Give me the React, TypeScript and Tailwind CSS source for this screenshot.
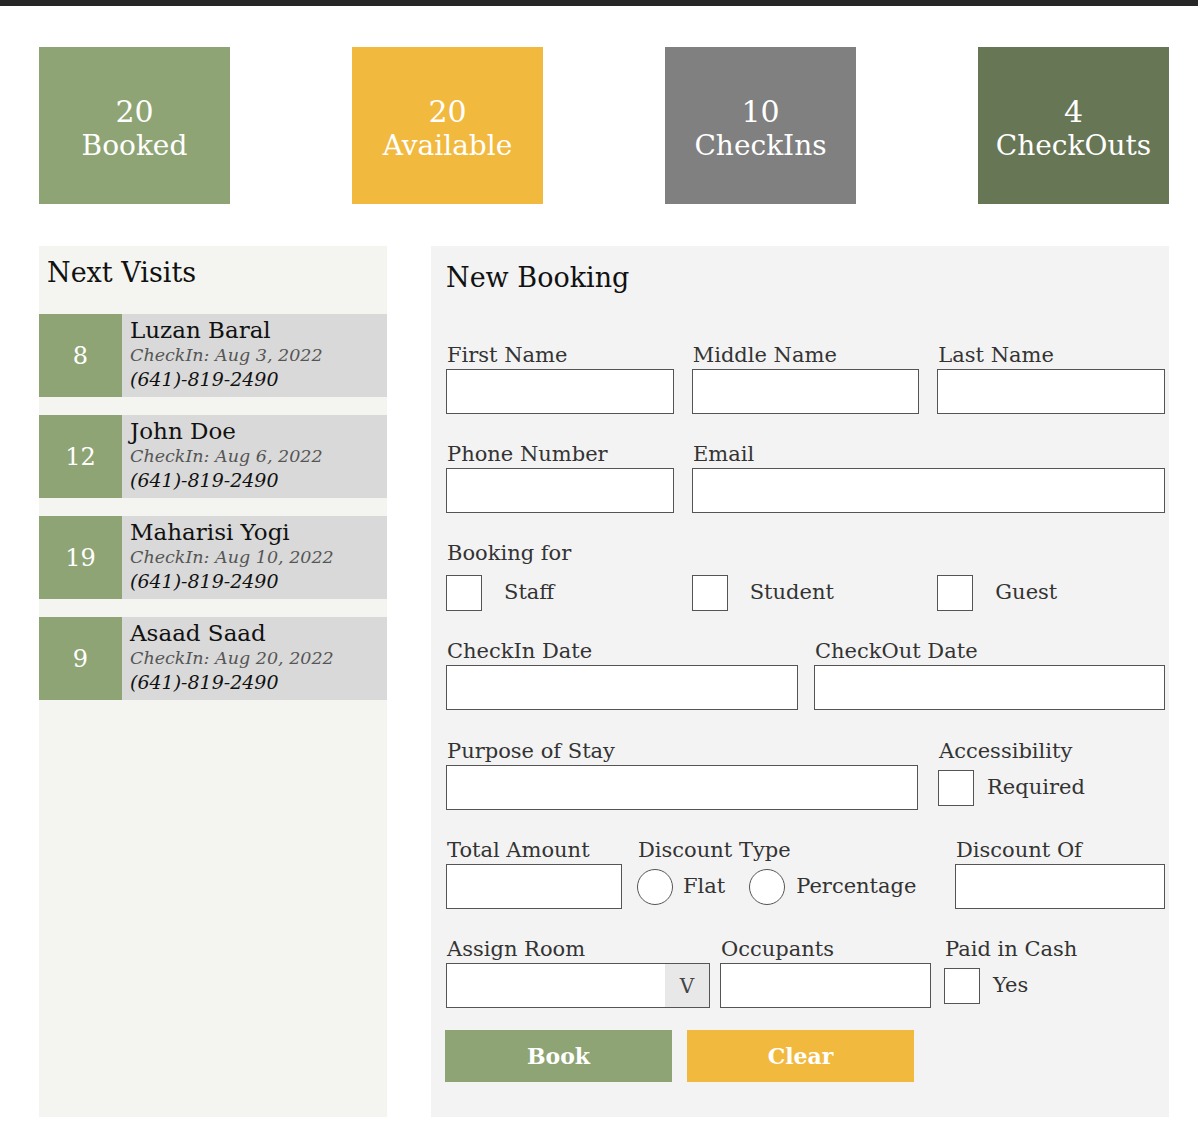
import React from "react";

const font = { fontFamily: '"DejaVu Serif", "Liberation Serif", serif' };

type Stat = { value: number; label: string; bg: string };

const stats: Stat[] = [
  { value: 20, label: "Booked", bg: "bg-[#8fa474]" },
  { value: 20, label: "Available", bg: "bg-[#f2b93f]" },
  { value: 10, label: "CheckIns", bg: "bg-[#808080]" },
  { value: 4, label: "CheckOuts", bg: "bg-[#677655]" },
];

const visits = [
  { room: 8, name: "Luzan Baral", date: "Aug 3, 2022", phone: "(641)-819-2490" },
  { room: 12, name: "John Doe", date: "Aug 6, 2022", phone: "(641)-819-2490" },
  { room: 19, name: "Maharisi Yogi", date: "Aug 10, 2022", phone: "(641)-819-2490" },
  { room: 9, name: "Asaad Saad", date: "Aug 20, 2022", phone: "(641)-819-2490" },
];

function Label({ children }: { children: React.ReactNode }) {
  return <div className="text-[21px] leading-[28px] text-[#333] pl-[1px]">{children}</div>;
}

function Input({ className = "" }: { className?: string }) {
  return <div className={`h-[45px] bg-white border border-[#555] ${className}`} />;
}

function Box() {
  return <div className="w-[36px] h-[36px] bg-white border border-[#555] shrink-0" />;
}

function Field({ label, className = "" }: { label: string; className?: string }) {
  return (
    <div className={className}>
      <Label>{label}</Label>
      <Input />
    </div>
  );
}

export default function App() {
  return (
    <div style={font} className="min-h-[1130px] bg-white text-[#111]">
      <div className="h-[6px] bg-[#262626]" />

      {/* Stat cards */}
      <div className="flex justify-between pl-[39px] pr-[29px] pt-[41px]">
        {stats.map((s) => (
          <div
            key={s.label}
            className={`w-[191px] h-[157px] ${s.bg} flex flex-col items-center justify-center pt-[6px] text-white`}
          >
            <div className="text-[30px] leading-[34px]">{s.value}</div>
            <div className="text-[28px] leading-[34px]">{s.label}</div>
          </div>
        ))}
      </div>

      <div className="flex pl-[39px] pt-[42px] gap-[44px]">
        {/* Next Visits */}
        <div className="w-[348px] h-[871px] bg-[#f4f5f0]">
          <div className="px-[8px] pt-[10px] h-[68px] text-[27px] leading-[34px]">Next Visits</div>
          <div className="flex flex-col gap-[18px]">
            {visits.map((v) => (
              <div key={v.name} className="flex h-[83px]">
                <div className="w-[83px] bg-[#8fa474] text-white text-[24px] flex items-center justify-center">
                  {v.room}
                </div>
                <div className="flex-1 bg-[#d9d9d9] px-[8px] pt-[3px]">
                  <div className="text-[23px] leading-[26px]">{v.name}</div>
                  <div className="text-[17.5px] leading-[24px] italic text-[#555]">CheckIn: {v.date}</div>
                  <div className="text-[19px] leading-[24px] italic text-[#111]">{v.phone}</div>
                </div>
              </div>
            ))}
          </div>
        </div>

        {/* New Booking */}
        <div className="w-[738px] h-[871px] bg-[#f3f3f3] pl-[15px] pr-[4px] pt-[14px]">
          <div className="text-[27px] leading-[36px] mb-[45px]">New Booking</div>

          <div className="flex flex-col gap-[26px]">
            <div className="flex gap-[18px]">
              <Field label="First Name" className="w-[228px]" />
              <Field label="Middle Name" className="w-[228px]" />
              <Field label="Last Name" className="w-[228px]" />
            </div>

            <div className="flex gap-[18px]">
              <Field label="Phone Number" className="w-[228px]" />
              <Field label="Email" className="flex-1" />
            </div>

            <div>
              <div className="mb-[8px]">
                <Label>Booking for</Label>
              </div>
              <div className="flex gap-[18px]">
                {["Staff", "Student", "Guest"].map((t) => (
                  <div key={t} className="w-[228px] flex items-center gap-[22px]">
                    <Box />
                    <span className="text-[21px] text-[#333]">{t}</span>
                  </div>
                ))}
              </div>
            </div>

            <div className="flex gap-[16px]">
              <Field label="CheckIn Date" className="w-[352px]" />
              <Field label="CheckOut Date" className="flex-1" />
            </div>

            <div className="flex gap-[20px] mt-[1px]">
              <Field label="Purpose of Stay" className="w-[472px]" />
              <div>
                <Label>Accessibility</Label>
                <div className="flex items-center gap-[13px] mt-[5px]">
                  <Box />
                  <span className="text-[21px] text-[#333]">Required</span>
                </div>
              </div>
            </div>

            <div className="flex">
              <Field label="Total Amount" className="w-[176px]" />
              <div className="ml-[15px] w-[318px]">
                <Label>Discount Type</Label>
                <div className="flex items-center mt-[5px]">
                  <div className="w-[36px] h-[36px] rounded-full bg-white border border-[#555]" />
                  <span className="ml-[10px] text-[21px] text-[#333]">Flat</span>
                  <div className="ml-[24px] w-[36px] h-[36px] rounded-full bg-white border border-[#555]" />
                  <span className="ml-[11px] text-[21px] text-[#333]">Percentage</span>
                </div>
              </div>
              <Field label="Discount Of" className="flex-1" />
            </div>

            <div className="flex">
              <div className="w-[264px]">
                <Label>Assign Room</Label>
                <div className="h-[45px] bg-white border border-[#555] flex justify-end">
                  <div className="w-[44px] bg-[#e8e8e8] flex items-center justify-center text-[20px] text-[#444]">
                    V
                  </div>
                </div>
              </div>
              <Field label="Occupants" className="ml-[10px] w-[211px]" />
              <div className="ml-[13px]">
                <Label>Paid in Cash</Label>
                <div className="flex items-center gap-[13px] mt-[5px]">
                  <Box />
                  <span className="text-[21px] text-[#333]">Yes</span>
                </div>
              </div>
            </div>

            <div className="flex gap-[15px] -ml-[1px] -mt-[4px]">
              <button className="w-[227px] h-[52px] bg-[#8fa474] text-white text-[22px] font-semibold">
                Book
              </button>
              <button className="w-[227px] h-[52px] bg-[#f2b93f] text-white text-[22px] font-semibold">
                Clear
              </button>
            </div>
          </div>
        </div>
      </div>
    </div>
  );
}
